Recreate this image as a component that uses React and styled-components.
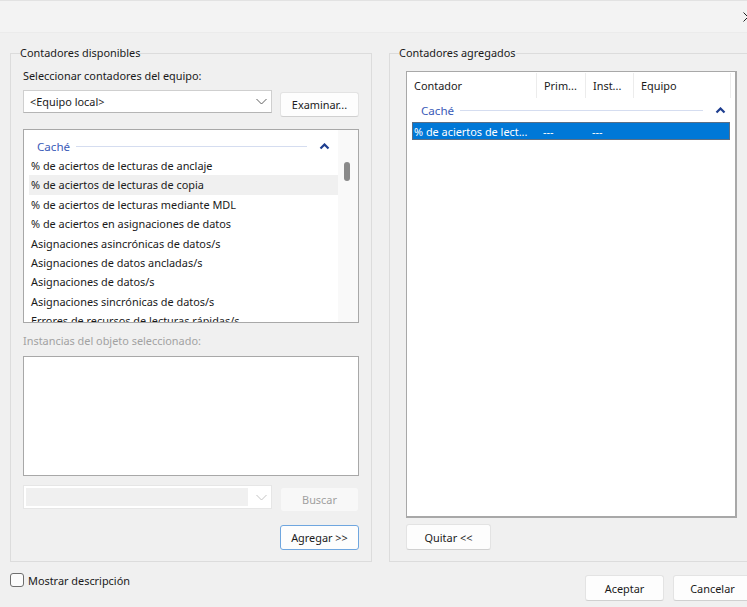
import React from 'react'
import styled, { createGlobalStyle } from 'styled-components';

const Global = createGlobalStyle`
  html, body { margin:0; padding:0; overflow:hidden; background:#f0f0f0; }
  body { font-family:"Noto Sans", "Open Sans", sans-serif; font-size:10.9px; color:#1a1a1a; }
  * { box-sizing:border-box; }
`;

const leftItems = [
  '% de aciertos de lecturas de anclaje',
  '% de aciertos de lecturas de copia',
  '% de aciertos de lecturas mediante MDL',
  '% de aciertos en asignaciones de datos',
  'Asignaciones asincrónicas de datos/s',
  'Asignaciones de datos ancladas/s',
  'Asignaciones de datos/s',
  'Asignaciones sincrónicas de datos/s',
  'Errores de recursos de lecturas rápidas/s',
];

const Chevron = ({ up, color = '#616161', w = 11 }) => (
  <svg width={w} height="7" viewBox="0 0 11 7">
    {up
      ? <path d="M1.5 5.5 L5.5 1.5 L9.5 5.5" fill="none" stroke={color} strokeWidth="2.2" />
      : <path d="M0.5 1 L5.5 6 L10.5 1" fill="none" stroke={color} strokeWidth="1" />}
  </svg>
);

function App() {
  return (
    <Dialog>
      <Global />
      <TitleBar>
        <svg width="10" height="10" viewBox="0 0 10 10">
          <path d="M0.5 0.5 L9.5 9.5 M9.5 0.5 L0.5 9.5" stroke="#222" strokeWidth="1" />
        </svg>
      </TitleBar>

      <Body>
        <Group $pl={12} $pr={12} $lm={-3} $w={362}>
          <legend>Contadores disponibles</legend>
          <Label $top={7}>Seleccionar contadores del equipo:</Label>
          <Row $top={6}>
            <Combo>
              <span>&lt;Equipo local&gt;</span>
              <Chevron />
            </Combo>
            <Button $top={2}>Examinar...</Button>
          </Row>

          <ListBox $top={12} $h={194}>
            <ListContent>
              <GroupHeader $pl={13} $h={20}>
                <span>Caché</span>
                <Rule />
                <Chevron up color="#1d3d8f" w={11} />
              </GroupHeader>
              {leftItems.map((t, i) => (
                <Item key={t} $hover={i === 1}>{t}</Item>
              ))}
            </ListContent>
            <ScrollTrack>
              <Thumb />
            </ScrollTrack>
          </ListBox>

          <Label $top={10} $disabled>Instancias del objeto seleccionado:</Label>
          <ListBox $top={7} $h={120} />

          <Row $top={9}>
            <Combo $disabled>
              <DisabledFill />
              <Chevron color="#c4c4c4" />
            </Combo>
            <Button $top={2} $disabled>Buscar</Button>
          </Row>

          <Row $top={13} $end>
            <Button $default>Agregar &gt;&gt;</Button>
          </Row>
        </Group>

        <Group $pl={16} $pr={14} $lm={-7} $w={363}>
          <legend>Contadores agregados</legend>
          <ListView $top={10}>
            <Header>
              <Col $w={130}>Contador</Col>
              <Col $w={49}>Prim...</Col>
              <Col $w={48}>Inst...</Col>
              <Col $w={97}>Equipo</Col>
            </Header>
            <GroupHeader $pl={14} $pr={9} $h={20}>
              <span>Caché</span>
              <Rule />
              <Chevron up color="#1d3d8f" w={11} />
            </GroupHeader>
            <SelectedRow>
              <Cell $w={129}>% de aciertos de lect...</Cell>
              <Cell $w={49}>---</Cell>
              <Cell $w={48}>---</Cell>
              <Cell $w={90}></Cell>
            </SelectedRow>
          </ListView>
          <Row $top={6}>
            <Button $w={85} $h={26}>Quitar &lt;&lt;</Button>
          </Row>
        </Group>
      </Body>

      <Footer>
        <Check>
          <Box />
          <span>Mostrar descripción</span>
        </Check>
        <Buttons>
          <Button $h={26}>Aceptar</Button>
          <Button $h={26}>Cancelar</Button>
        </Buttons>
      </Footer>
    </Dialog>
  )
}

export default App;

const Dialog = styled.div`
  width:762px;
  height:607px;
  display:flex;
  flex-direction:column;
  background:#f0f0f0;
`;

const TitleBar = styled.div`
  height:33px;
  flex:none;
  background:#f3f3f3;
  border-top:1px solid #e2e2e2;
  border-bottom:1px solid #ebebeb;
  display:flex;
  align-items:center;
  justify-content:flex-end;
  padding-right:9px;
  padding-top:1px;
`;

const Body = styled.div`
  display:flex;
  gap:17px;
  padding:12px 10px 0 10px;
`;

const Group = styled.fieldset`
  margin:0;
  width:${p => p.$w}px;
  height:517px;
  border:1px solid #dcdcdc;
  padding:0 ${p => p.$pr}px 0 ${p => p.$pl}px;
  display:flex;
  flex-direction:column;
  min-width:0;
  legend{
    padding:0;
    margin-left:${p => p.$lm}px;
    line-height:16px;
    color:#1a1a1a;
  }
`;

const Label = styled.div`
  margin-top:${p => p.$top}px;
  line-height:16px;
  color:${p => p.$disabled ? '#a2a2a2' : '#1a1a1a'};
`;

const Row = styled.div`
  margin-top:${p => p.$top}px;
  display:flex;
  align-items:flex-start;
  justify-content:${p => p.$end ? 'flex-end' : 'space-between'};
`;

const Combo = styled.div`
  width:249px;
  height:${p => p.$disabled ? 24 : 23}px;
  background:#fff;
  border:1px solid ${p => p.$disabled ? '#e6e6e6' : '#cfcfcf'};
  border-bottom-color:${p => p.$disabled ? '#e6e6e6' : '#b5b5b5'};
  display:flex;
  align-items:center;
  padding:${p => p.$disabled ? '0 4px 0 2px' : '0 4px 0 6px'};
  gap:8px;
  span{ flex:1; }
`;

const DisabledFill = styled.div`
  flex:1;
  height:18px;
  background:#f0f0f0;
`;

const Button = styled.button`
  margin-top:${p => p.$top || 0}px;
  width:${p => p.$w || 79}px;
  height:${p => p.$h || 25}px;
  font:inherit;
  color:${p => p.$disabled ? '#a0a0a0' : '#1a1a1a'};
  background:${p => p.$disabled ? '#f8f8f8' : '#fdfdfd'};
  border:1px solid ${p => p.$default ? '#6fa6df' : p.$disabled ? '#f0f0f0' : '#e3e3e3'};
  border-bottom-color:${p => p.$default ? '#6fa6df' : p.$disabled ? '#f0f0f0' : '#d0d0d0'};
  border-radius:3px;
  padding:0;
  cursor:default;
`;

const ListBox = styled.div`
  margin-top:${p => p.$top}px;
  height:${p => p.$h}px;
  background:#fff;
  border:1px solid #a8a8a8;
  display:flex;
  overflow:hidden;
`;

const ListContent = styled.div`
  flex:1;
  padding:6px 0 0 0;
  overflow:hidden;
`;

const GroupHeader = styled.div`
  height:${p => p.$h}px;
  display:flex;
  align-items:center;
  gap:6px;
  padding:0 ${p => p.$pr || 8}px 0 ${p => p.$pl}px;
  color:#3a5bb8;
  font-size:11.6px;
`;

const Rule = styled.div`
  flex:1;
  height:1px;
  background:#d5ddf0;
  margin-right:6px;
`;

const Item = styled.div`
  height:19.4px;
  line-height:19.4px;
  margin-left:5px;
  padding-left:2px;
  white-space:nowrap;
  background:${p => p.$hover ? '#f0f0f0' : 'transparent'};
`;

const ScrollTrack = styled.div`
  width:20px;
  flex:none;
  background:#f9f9f9;
  padding:32px 0 0 6px;
`;

const Thumb = styled.div`
  width:6px;
  height:19px;
  border-radius:3px;
  background:#8a8a8a;
`;

const ListView = styled.div`
  margin-top:${p => p.$top}px;
  height:447px;
  background:#fff;
  border:1px solid #a8a8a8;
  border-width:1px 2px 2px 1px;
`;

const Header = styled.div`
  height:28px;
  display:flex;
`;

const Col = styled.div`
  width:${p => p.$w}px;
  padding-left:7px;
  display:flex;
  align-items:center;
  border-right:1px solid #ececec;
  margin:1px 0 2px;
  white-space:nowrap;
`;

const SelectedRow = styled.div`
  margin:2px 5px 0 5px;
  height:18px;
  display:flex;
  align-items:center;
  background:#0078d7;
  border:1px solid #5b6f86;
  color:#fff;
`;

const Cell = styled.div`
  width:${p => p.$w}px;
  padding-left:1px;
  white-space:nowrap;
`;

const Footer = styled.div`
  margin-top:10px;
  padding:0 10px;
  display:flex;
  justify-content:space-between;
  align-items:flex-start;
`;

const Check = styled.label`
  display:flex;
  align-items:center;
  gap:4px;
  height:16px;
`;

const Box = styled.div`
  width:14px;
  height:14px;
  border:1px solid #6e6e6e;
  border-radius:3px;
  background:#fbfbfb;
`;

const Buttons = styled.div`
  display:flex;
  gap:9px;
  margin-top:3px;
`;
